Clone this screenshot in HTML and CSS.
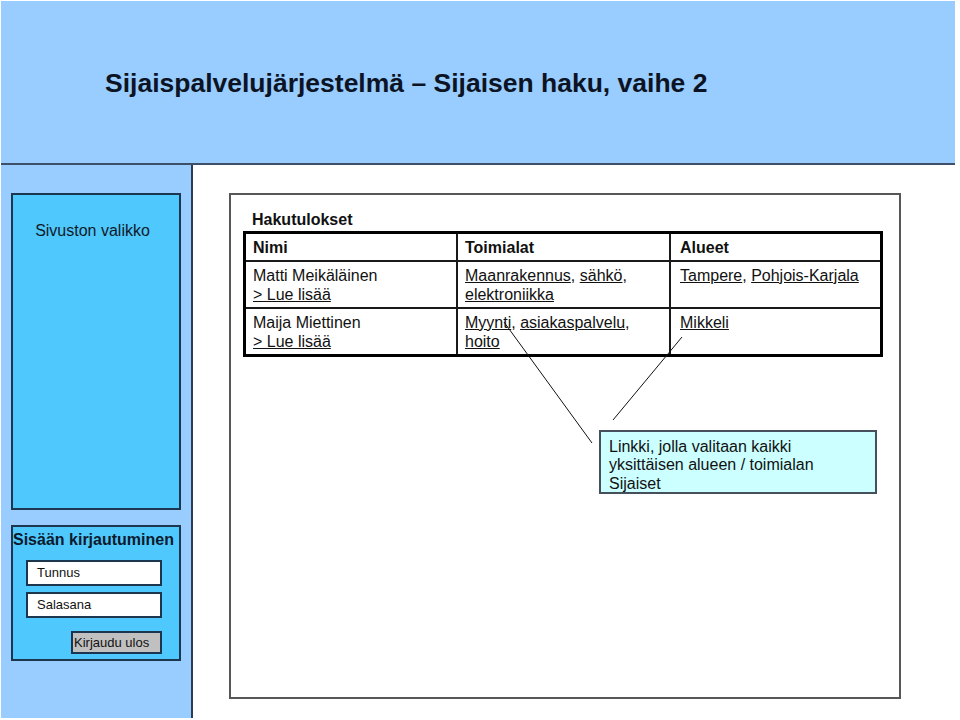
FILE: index.html
```html
<!DOCTYPE html>
<html lang="fi">
<head>
<meta charset="utf-8">
<title>Sijaispalvelujärjestelmä – Sijaisen haku, vaihe 2</title>
<link rel="stylesheet" href="styles.css">
</head>
<body>
<div class="page">
  <header class="header">
    <h1 class="title">Sijaispalvelujärjestelmä – Sijaisen haku, vaihe 2</h1>
  </header>
  <div class="layout">
    <aside class="sidebar">
      <nav class="menu-box">Sivuston valikko</nav>
      <section class="login-box">
        <h2 class="login-title">Sisään kirjautuminen</h2>
        <div class="field">Tunnus</div>
        <div class="field field-second">Salasana</div>
        <div class="button">Kirjaudu ulos</div>
      </section>
    </aside>
    <main class="main">
      <div class="results-box">
        <h3 class="results-title">Hakutulokset</h3>
        <table class="results">
          <colgroup>
            <col class="c1"><col class="c2"><col class="c3">
          </colgroup>
          <thead>
            <tr>
              <th class="col1">Nimi</th>
              <th class="col2">Toimialat</th>
              <th class="col3">Alueet</th>
            </tr>
          </thead>
          <tbody>
            <tr>
              <td class="col1">Matti Meikäläinen<br><a href="#">&gt; Lue lisää</a></td>
              <td class="col2"><a href="#">Maanrakennus</a>, <a href="#">sähkö</a>,<br><a href="#">elektroniikka</a></td>
              <td class="col3"><a href="#">Tampere</a>, <a href="#">Pohjois-Karjala</a></td>
            </tr>
            <tr class="last">
              <td class="col1">Maija Miettinen<br><a href="#">&gt; Lue lisää</a></td>
              <td class="col2"><a href="#">Myynti</a>, <a href="#">asiakaspalvelu</a>,<br><a href="#">hoito</a></td>
              <td class="col3"><a href="#">Mikkeli</a></td>
            </tr>
          </tbody>
        </table>
        <svg class="pointers" width="668" height="502" viewBox="0 0 668 502" aria-hidden="true">
          <line x1="273" y1="127" x2="361" y2="248"/>
          <line x1="451" y1="142" x2="382" y2="225"/>
        </svg>
        <div class="callout">Linkki, jolla valitaan kaikki<br>yksittäisen alueen / toimialan<br>Sijaiset</div>
      </div>
    </main>
  </div>
</div>
</body>
</html>
```

FILE: styles.css
```css
* { box-sizing: border-box; }

html, body {
  margin: 0;
  padding: 0;
  background: #ffffff;
}

body {
  font-family: "Liberation Sans", Arial, sans-serif;
  color: #111111;
}

.page {
  width: 954px;
  height: 717px;
  margin: 1px 0 0 1px;
  display: flex;
  flex-direction: column;
}

.header {
  height: 164px;
  flex: none;
  background: #99ccff;
  border-bottom: 2px solid #3e5068;
  display: flex;
  align-items: center;
  padding-left: 104px;
}

.title {
  margin: 0;
  font-size: 26.5px;
  font-weight: bold;
  color: #0c1424;
  line-height: 30px;
  padding-top: 2px;
}

.layout {
  flex: 1;
  display: flex;
}

.sidebar {
  width: 192px;
  flex: none;
  background: #99ccff;
  border-right: 2px solid #2c3d52;
  padding: 28px 0 0 10px;
  display: flex;
  flex-direction: column;
  gap: 15px;
}

.menu-box {
  width: 170px;
  height: 317px;
  background: #4fc8fd;
  border: 2px solid #1d3650;
  padding: 27px 7px 0 0;
  text-align: center;
  font-size: 16px;
  line-height: 18px;
  color: #0f1a28;
}

.login-box {
  width: 170px;
  height: 136px;
  background: #4fc8fd;
  border: 2px solid #1d3650;
  padding: 4px 0 0 13px;
}

.login-title {
  margin: 0 0 11px -13px;
  padding-right: 6px;
  font-size: 16px;
  line-height: 18px;
  font-weight: bold;
  text-align: center;
  white-space: nowrap;
  color: #0c1a2c;
}

.field {
  width: 136px;
  height: 26px;
  background: #ffffff;
  border: 2px solid #1d3650;
  padding-left: 9px;
  font-size: 13px;
  line-height: 22px;
  color: #111111;
}

.field-second {
  margin-top: 6px;
}

.button {
  width: 91px;
  height: 23px;
  margin: 13px 0 0 45px;
  background: #c0c0c0;
  border: 2px solid #1d3650;
  padding-left: 1px;
  font-size: 13px;
  line-height: 19px;
  color: #111111;
}

.main {
  flex: 1;
  background: #ffffff;
  padding: 28px 0 0 36px;
}

.results-box {
  position: relative;
  width: 672px;
  height: 506px;
  border: 2px solid #575757;
  padding: 16px 16px 0 12px;
}

.results-title {
  margin: 0 0 2px 0;
  padding-left: 9px;
  font-size: 16px;
  line-height: 18px;
  font-weight: bold;
  color: #111111;
}

.results {
  width: 640px;
  table-layout: fixed;
  border-collapse: separate;
  border-spacing: 0;
  border: 3px solid #000000;
}

.c1 { width: 212px; }
.c2 { width: 213px; }
.c3 { width: 209px; }

.results th,
.results td {
  text-align: left;
  vertical-align: top;
  padding: 4px 4px 3px 7px;
  border-right: 2px solid #1a1a1a;
  border-bottom: 2px solid #1a1a1a;
  color: #111111;
  white-space: nowrap;
}

.results th {
  font-size: 16px;
  line-height: 19px;
  font-weight: bold;
}

.results td {
  font-size: 16px;
  line-height: 19px;
  height: 47px;
}

.results th.col3,
.results td.col3 {
  border-right: none;
  padding-left: 9px;
}

.results .last td {
  border-bottom: none;
  height: 45px;
}

.results a {
  color: #111111;
  text-decoration: underline;
}

.pointers {
  position: absolute;
  left: 0;
  top: 0;
}

.pointers line {
  stroke: #111111;
  stroke-width: 1;
}

.callout {
  position: absolute;
  left: 368px;
  top: 235px;
  width: 278px;
  height: 64px;
  background: #ccffff;
  border: 2px solid #46505c;
  padding: 6px 0 0 8px;
  font-size: 16px;
  line-height: 18.4px;
  color: #111111;
}
```
